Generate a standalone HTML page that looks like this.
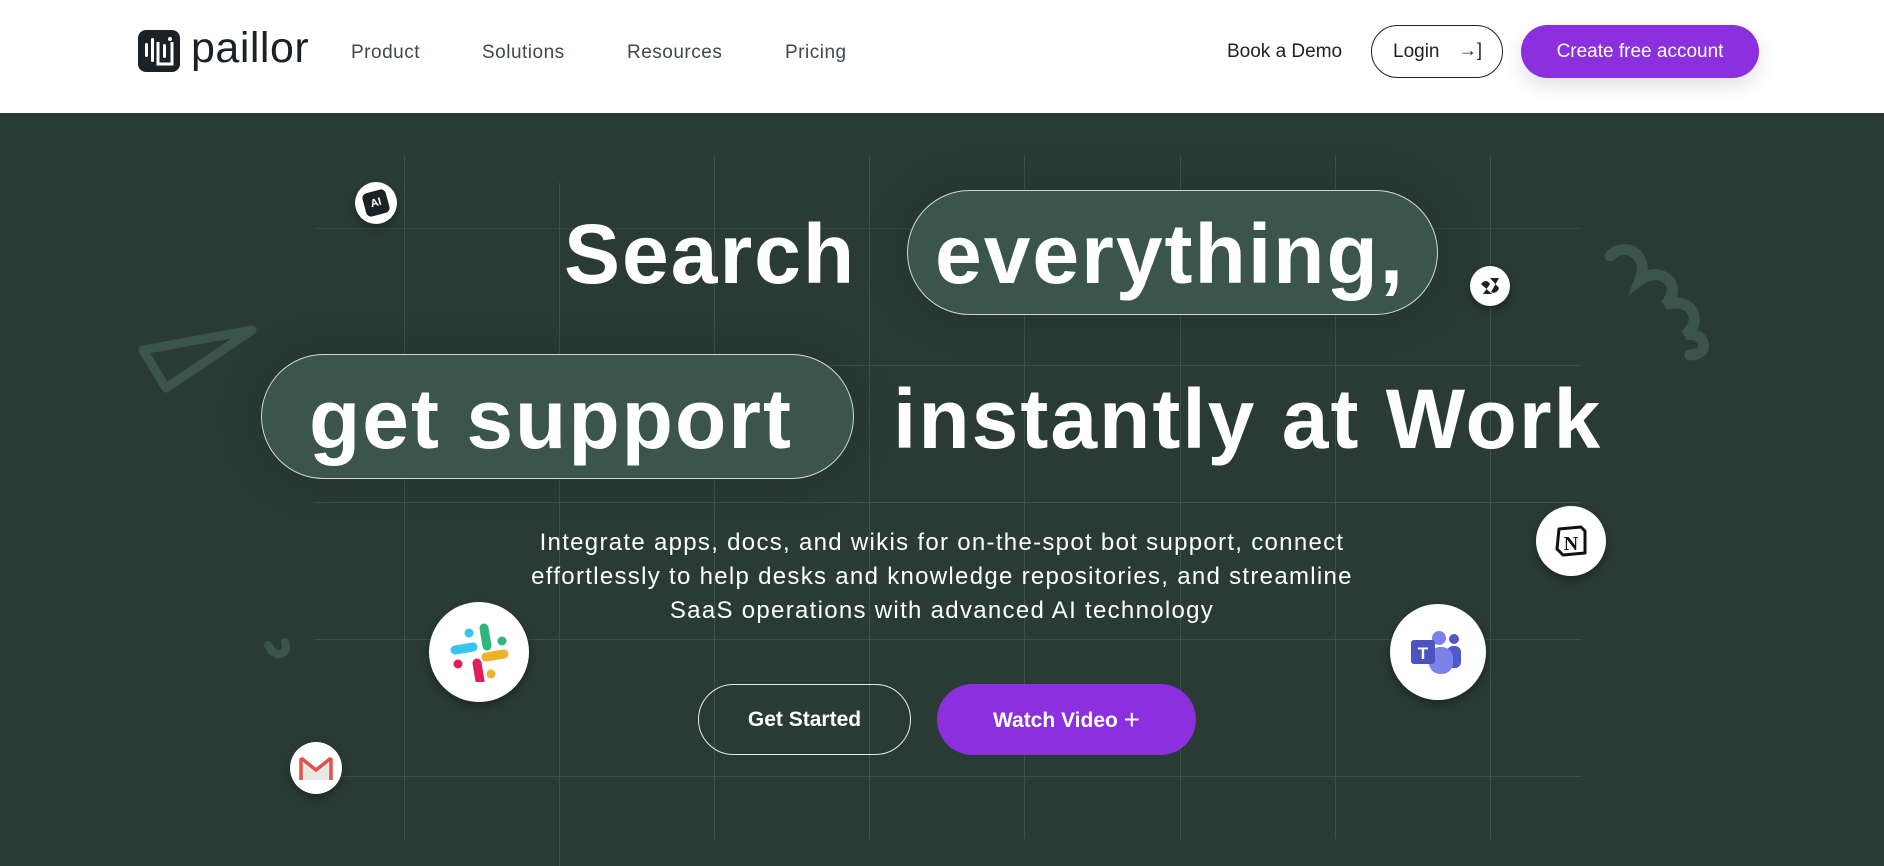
<!DOCTYPE html>
<html><head><meta charset="utf-8"><style>
*{margin:0;padding:0;box-sizing:border-box}
body{width:1884px;height:865px;overflow:hidden;background:#2a3b36;font-family:"Liberation Sans",sans-serif;position:relative}
.hdr{position:absolute;left:0;top:0;width:1884px;height:113px;background:#fff}
.abs{position:absolute}
.nav{position:absolute;top:42px;font-size:19px;color:#3d4a4f;letter-spacing:.5px}
.pill{position:absolute;background:#3b554c;border:1.5px solid #cfd8d4;border-radius:70px;box-shadow:0 0 40px 10px rgba(0,0,0,.12)}
.h{position:absolute;color:#fff;font-weight:bold;font-size:84px;letter-spacing:2px;line-height:1;white-space:nowrap}
.gv{position:absolute;width:1px;background:#3c5249;top:156px;height:683px}
.gh{position:absolute;height:1px;background:#3c5249;left:315px;width:1266px}
.ic{position:absolute;background:#fff;border-radius:50%;box-shadow:0 4px 10px rgba(0,0,0,.35);display:flex;align-items:center;justify-content:center}
</style></head><body>
<div class="hdr"></div>
<svg class="abs" style="left:138px;top:30px" width="42" height="42" viewBox="0 0 42 42"><rect width="42" height="42" rx="8" fill="#1c2126"/><rect x="7" y="13" width="3" height="14" rx="1.5" fill="#fff"/><rect x="13" y="8" width="3" height="24" rx="1.5" fill="#fff"/><path d="M20 12v22h14V12" stroke="#fff" stroke-width="3" fill="none"/><rect x="25" y="14" width="3" height="14" rx="1.5" fill="#fff"/><circle cx="32" cy="9" r="2" fill="#fff"/></svg>
<div class="abs" style="left:191px;top:24px;font-size:43px;color:#1c2126;letter-spacing:.5px">paillor</div>
<div class="nav" style="left:351px">Product</div>
<div class="nav" style="left:482px">Solutions</div>
<div class="nav" style="left:627px">Resources</div>
<div class="nav" style="left:785px">Pricing</div>
<div class="abs" style="left:1227px;top:41px;font-size:19px;color:#1c2126">Book a Demo</div>
<div class="abs" style="left:1371px;top:25px;width:132px;height:53px;border:1.5px solid #1c2126;border-radius:27px;font-size:19px;color:#1c2126;padding:15px 0 0 21px">Login <span style="position:absolute;right:20px;top:14px;font-size:18px">&#8594;]</span></div>
<div class="abs" style="left:1521px;top:25px;width:238px;height:53px;background:#8b2fdf;border-radius:27px;font-size:19px;color:#fff;text-align:center;line-height:53px;box-shadow:0 8px 20px rgba(0,0,0,.12)">Create free account</div>

<div class="gv" style="left:404px"></div><div class="gv" style="left:559px;top:183px"></div><div class="gv" style="left:714px"></div><div class="gv" style="left:869px"></div><div class="gv" style="left:1024px"></div><div class="gv" style="left:1180px"></div><div class="gv" style="left:1335px"></div><div class="gv" style="left:1490px"></div>
<div class="gh" style="top:228px;opacity:.6"></div><div class="gh" style="top:365px"></div><div class="gh" style="top:502px"></div><div class="gh" style="top:639px"></div><div class="gh" style="top:776px"></div>

<svg class="abs" style="left:0;top:0" width="1884" height="865"><path d="M143 350 L252 330 L166 388 Z" stroke="#3b554c" stroke-width="9" fill="none" stroke-linejoin="round"/>
<path d="M1610 256 C1625 240 1650 255 1640 280 C1660 265 1685 285 1665 305 C1690 295 1705 320 1685 335 C1705 330 1712 355 1690 355" stroke="#3b554c" stroke-width="11" fill="none" stroke-linecap="round"/>
<path d="M268 645 C275 660 290 655 285 642" stroke="#3b554c" stroke-width="8" fill="none" stroke-linecap="round"/></svg>

<div class="pill" style="left:907px;top:190px;width:531px;height:125px"></div>
<div class="pill" style="left:261px;top:354px;width:593px;height:125px"></div>
<div class="h" style="left:564px;top:212px">Search</div>
<div class="h" style="left:935px;top:212px">everything,</div>
<div class="h" style="left:309px;top:377px">get support</div>
<div class="h" style="left:893px;top:377px">instantly at Work</div>

<div class="abs" style="left:392px;top:526px;width:1100px;text-align:center;color:#fff;font-size:24px;letter-spacing:1.3px;line-height:34px">Integrate apps, docs, and wikis for on-the-spot bot support, connect<br>effortlessly to help desks and knowledge repositories, and streamline<br>SaaS operations with advanced AI technology</div>

<div class="abs" style="left:698px;top:684px;width:213px;height:71px;border:1.5px solid #e6ece9;border-radius:36px;color:#fff;font-size:21px;font-weight:bold;text-align:center;line-height:70px">Get Started</div>
<div class="abs" style="left:937px;top:684px;width:259px;height:71px;background:#8b2fdf;border-radius:36px;color:#fff;font-size:21px;font-weight:bold;text-align:center;line-height:71px">Watch Video <span style="font-weight:normal;font-size:28px;vertical-align:-2px">+</span></div>

<div class="ic" style="left:355px;top:182px;width:42px;height:42px"><div style="width:24px;height:24px;background:#1c2126;border-radius:5px;transform:rotate(-15deg);color:#fff;font-size:11px;font-weight:bold;text-align:center;line-height:24px">AI</div></div>
<div class="ic" style="left:1470px;top:266px;width:40px;height:40px"><svg width="24" height="24" viewBox="0 0 24 24"><path d="M3 10c3-4 7-4 9 0L5 20h9" fill="#1c2126"/><path d="M12 4h9L13 18c3 2 7 0 8-4" fill="#1c2126"/></svg></div>
<div class="ic" style="left:1536px;top:506px;width:70px;height:70px"><svg width="36" height="36" viewBox="0 0 36 36"><path d="M6 6l22-2 4 4v22L10 32 4 26z" fill="#fff" stroke="#111" stroke-width="3" stroke-linejoin="round"/><text x="18" y="27" font-family="Liberation Serif" font-weight="bold" font-size="20" text-anchor="middle" fill="#111">N</text></svg></div>
<div class="ic" style="left:1390px;top:604px;width:96px;height:96px"><svg width="54" height="44" viewBox="0 0 54 44"><circle cx="43" cy="9" r="5" fill="#5059c9"/><rect x="36" y="16" width="14" height="22" rx="6" fill="#5059c9"/><circle cx="28" cy="8" r="7" fill="#7b83eb"/><rect x="18" y="17" width="24" height="27" rx="11" fill="#7b83eb"/><rect x="0" y="10" width="24" height="24" rx="3" fill="#4b53bc"/><text x="12" y="29" font-size="17" font-weight="bold" fill="#fff" text-anchor="middle" font-family="Liberation Sans">T</text></svg></div>
<div class="ic" style="left:429px;top:602px;width:100px;height:100px"><svg width="60" height="60" viewBox="0 0 60 60"><g stroke-linecap="round" stroke-width="9"><path d="M35 6l3 18" stroke="#2eb67d"/><path d="M53 19v0" stroke="#2eb67d"/><path d="M6 28l18-3" stroke="#36c5f0"/><path d="M28 41l3 18" stroke="#e01e5a"/><path d="M9 42v0" stroke="#e01e5a"/><path d="M37 35l18-3" stroke="#ecb22e"/><path d="M42 52v0" stroke="#ecb22e"/><path d="M20 11v0" stroke="#36c5f0"/></g></svg></div>
<div class="ic" style="left:290px;top:742px;width:52px;height:52px"><svg width="34" height="28" viewBox="0 0 34 28"><path d="M2 4l15 12 15-12v22H2z" fill="#e8e8e4"/><path d="M2 4v22M32 4v22M2 4l15 12 15-12" stroke="#e0534a" stroke-width="3.5" fill="none"/></svg></div>
</body></html>
